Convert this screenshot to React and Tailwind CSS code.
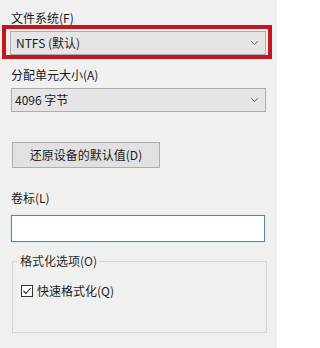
const font = { fontFamily: '"Noto Sans CJK SC", "Noto Sans", sans-serif' };

const Chevron = () => (
	<svg width="9" height="6" viewBox="0 0 9 6" className="shrink-0">
		<path d="M1 1.2 L4.5 4.5 L8 1.2" fill="none" stroke="#666" strokeWidth="1" />
	</svg>
);

const Combo = ({ text, className }) => (
	<div
		className={`h-[24px] flex items-center justify-between bg-[#e5e5e5] border border-[#adadad] pr-[6px] text-[#1b1b1b] ${className}`}>
		<span>{text}</span>
		<Chevron />
	</div>
);

const App = () => {
	return (
		<div
			style={font}
			className="w-[277px] h-[348px] bg-[#f0f0f0] text-[12px] leading-[16px] text-[#1a1a1a] pt-[10px] overflow-hidden">
			{/* File system */}
			<div className="pl-[11px] h-[15px] leading-[15px]">文件系统(F)</div>
			<div className="ml-[2px] w-[270px] h-[34px] border-4 border-[#c5161d] pt-[2px] pl-[4px]">
				<Combo text="NTFS (默认)" className="w-[256px] pl-[5px]" />
			</div>

			{/* Allocation unit size */}
			<div className="pl-[11px] mt-[8px]">分配单元大小(A)</div>
			<Combo text="4096 字节" className="mt-[5px] ml-[11px] w-[255px] pl-[3px]" />

			{/* Restore defaults */}
			<button
				type="button"
				className="mt-[30px] ml-[12px] w-[148px] h-[26px] flex items-center justify-center bg-[#e1e1e1] border border-[#adadad] text-[#1a1a1a]">
				还原设备的默认值(D)
			</button>

			{/* Volume label */}
			<div className="pl-[11px] mt-[22px]">卷标(L)</div>
			<div className="mt-[9px] ml-[11px] w-[254px] h-[27px] bg-white border border-[#62849c] shadow-[0_0_0_1px_#d6ebf7]" />

			{/* Format options */}
			<fieldset className="mt-[11px] ml-[12px] w-[255px] h-[80px] border border-[#d7d7d7] px-[8px]">
				<legend className="-ml-[3px] px-[2px] text-[#2a2a2a]">格式化选项(O)</legend>
				<label className="mt-[14px] flex items-center gap-[4px]">
					<span className="w-[12px] h-[12px] bg-white border border-[#333] flex items-center justify-center">
						<svg width="10" height="10" viewBox="0 0 10 10">
							<path d="M1.5 5 L4 7.5 L8.8 2" fill="none" stroke="#222" strokeWidth="1.1" />
						</svg>
					</span>
					<span>快速格式化(Q)</span>
				</label>
			</fieldset>
		</div>
	);
};

export default App;
